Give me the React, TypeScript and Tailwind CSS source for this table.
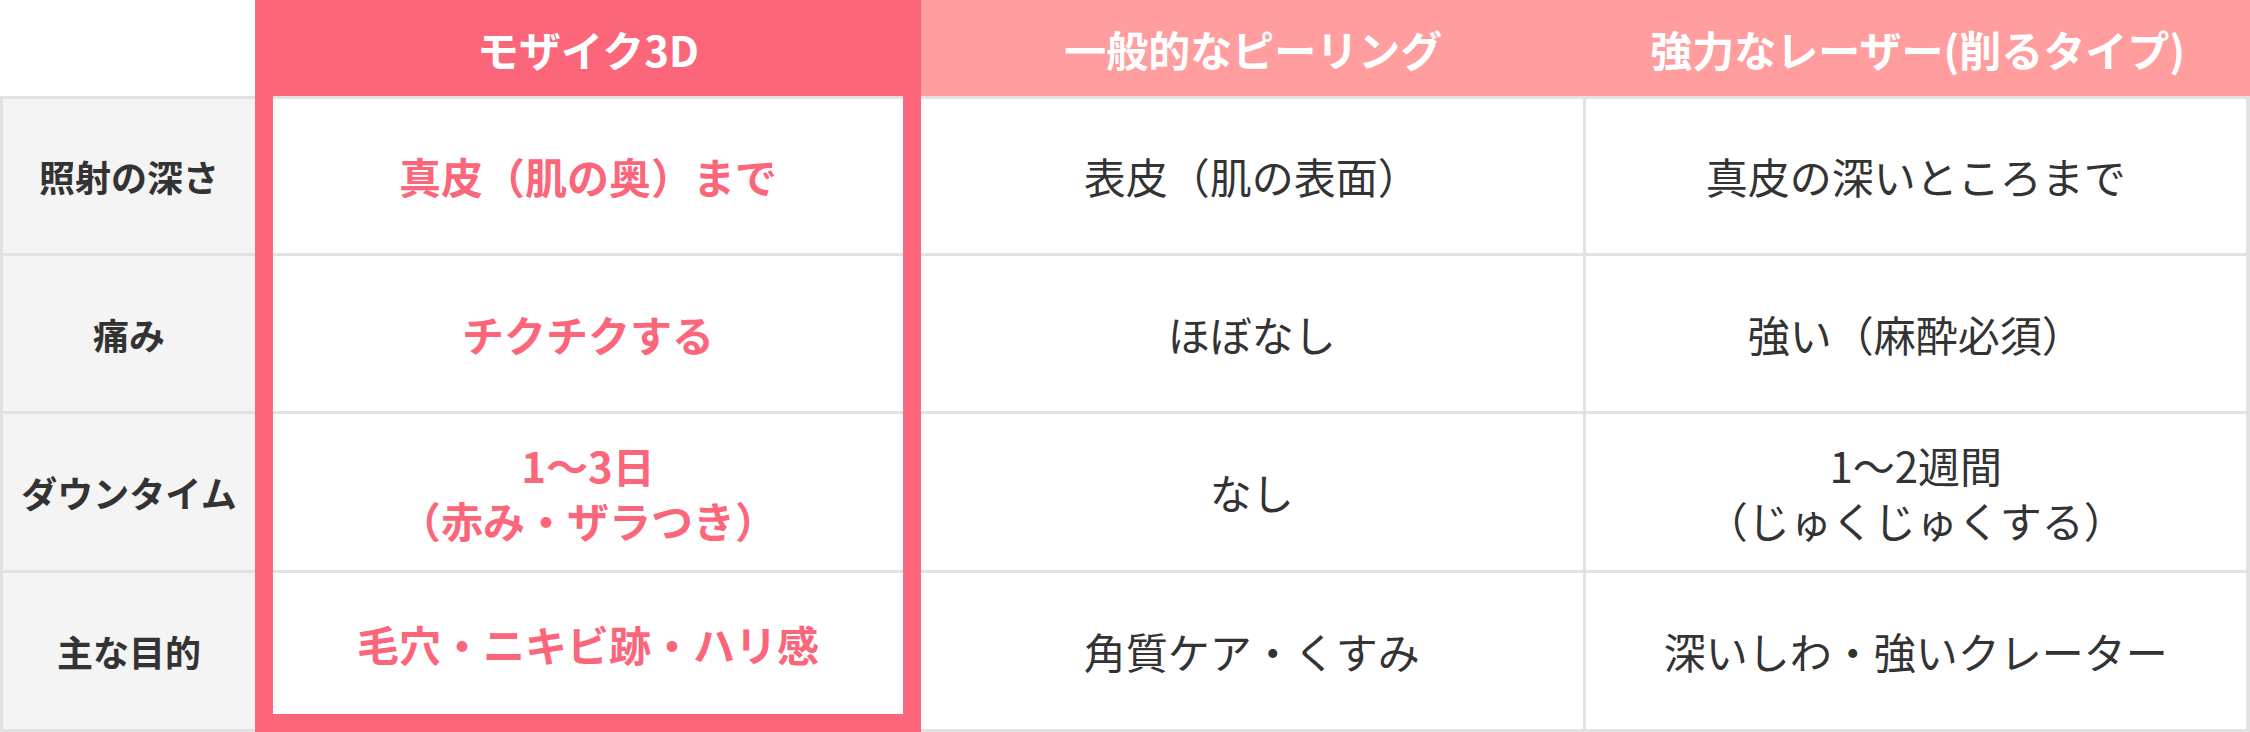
import React from "react";

const FONT = { fontFamily: '"Noto Sans CJK JP", "Noto Sans", sans-serif' };

const labels = ["照射の深さ", "痛み", "ダウンタイム", "主な目的"];

const mosaic: string[][] = [
  ["真皮（肌の奥）まで"],
  ["チクチクする"],
  ["1〜3日", "（赤み・ザラつき）"],
  ["毛穴・ニキビ跡・ハリ感"],
];

const peeling: string[][] = [
  ["表皮（肌の表面）"],
  ["ほぼなし"],
  ["なし"],
  ["角質ケア・くすみ"],
];

const laser: string[][] = [
  ["真皮の深いところまで"],
  ["強い（麻酔必須）"],
  ["1〜2週間", "（じゅくじゅくする）"],
  ["深いしわ・強いクレーター"],
];

const rowH = ["h-[157px]", "h-[158px]", "h-[159px]"];

function Lines({ lines }: { lines: string[] }) {
  return (
    <div className="text-center leading-[1.32]">
      {lines.map((l, i) => (
        <div key={i}>{l}</div>
      ))}
    </div>
  );
}

function PlainColumn({ header, data, rightBorder }: { header: string; data: string[][]; rightBorder: string }) {
  return (
    <div className="flex-1 flex flex-col">
      <div className="h-[96px] bg-[#ff9d9f] flex items-center justify-center text-white text-[42px] font-bold">
        {header}
      </div>
      {data.map((lines, i) => (
        <div
          key={i}
          className={
            "flex items-center justify-center border-t-[3px] border-[#e2e2e2] bg-white text-[#333333] text-[42px] font-normal " +
            rightBorder +
            " " +
            (i < 3 ? rowH[i] : "h-[162px] border-b-[3px]")
          }
        >
          <Lines lines={lines} />
        </div>
      ))}
    </div>
  );
}

export default function App() {
  return (
    <div className="w-[2250px] h-[732px] bg-white flex overflow-hidden" style={FONT}>
      {/* label column */}
      <div className="w-[255px] flex flex-col shrink-0">
        <div className="h-[96px] bg-white" />
        {labels.map((l, i) => (
          <div
            key={i}
            className={
              "flex items-center justify-center bg-[#f4f4f4] border-l-[3px] border-t-[3px] border-[#e2e2e2] text-[#333333] text-[36px] font-bold " +
              (i < 3 ? rowH[i] : "h-[162px] border-b-[3px]")
            }
          >
            {l}
          </div>
        ))}
      </div>

      {/* highlighted column */}
      <div className="w-[666px] shrink-0 flex flex-col bg-[#fb667a] px-[18px] pb-[18px]">
        <div className="h-[96px] flex items-center justify-center text-white text-[42px] font-bold">
          モザイク3D
        </div>
        {mosaic.map((lines, i) => (
          <div
            key={i}
            className={
              "flex items-center justify-center bg-white border-t-[3px] border-[#e2e2e2] text-[#fb667a] text-[42px] font-bold " +
              (i < 3 ? rowH[i] : "h-[144px]")
            }
          >
            <Lines lines={lines} />
          </div>
        ))}
      </div>

      <PlainColumn header="一般的なピーリング" data={peeling} rightBorder="border-r-[3px]" />
      <PlainColumn header="強力なレーザー(削るタイプ)" data={laser} rightBorder="border-r-[4px]" />
    </div>
  );
}
